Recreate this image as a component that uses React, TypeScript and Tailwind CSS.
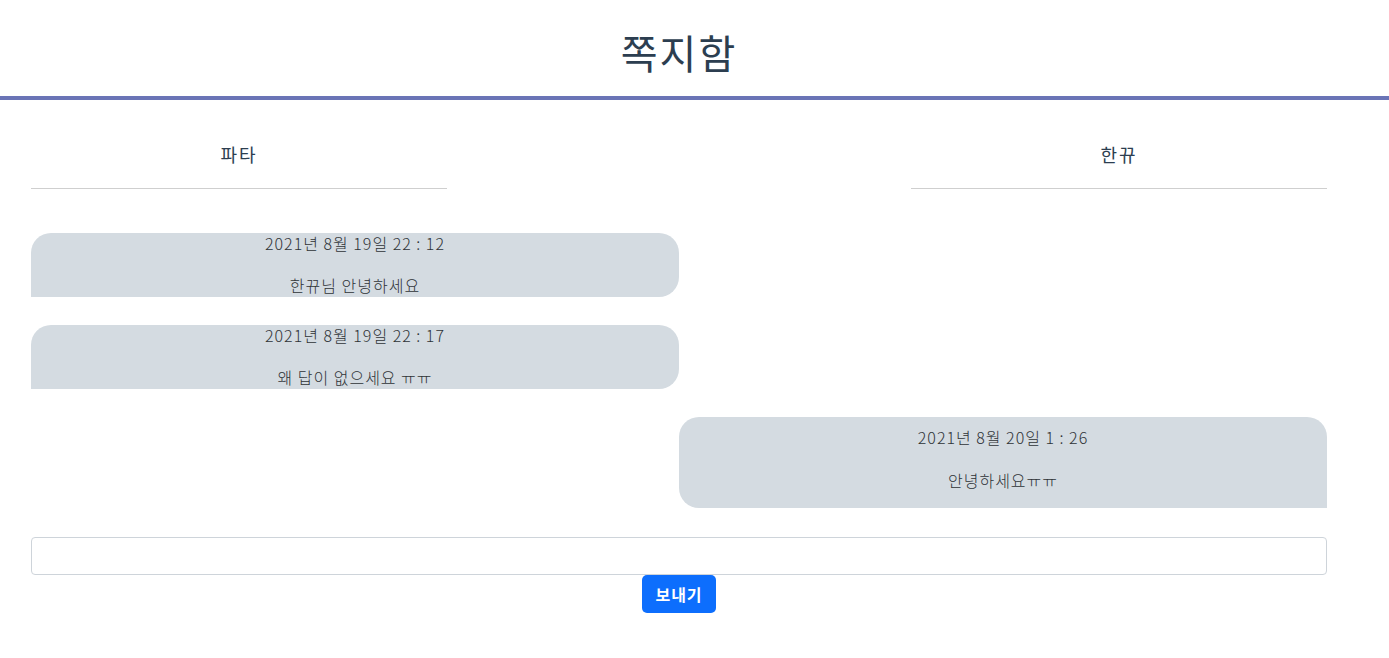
import { useState } from "react"

type Message = {
    id: number
    mine: boolean
    date: string
    text: string
}

const messages: Message[] = [
    { id: 1, mine: false, date: "2021년 8월 19일 22 : 12", text: "한뀨님 안녕하세요" },
    { id: 2, mine: false, date: "2021년 8월 19일 22 : 17", text: "왜 답이 없으세요 ㅠㅠ" },
    { id: 3, mine: true, date: "2021년 8월 20일 1 : 26", text: "안녕하세요ㅠㅠ" },
]

const font = { fontFamily: '"Noto Sans CJK KR", "Noto Sans", sans-serif' }

const Bubble = ({ message }: { message: Message }) => {
    if (message.mine) {
        return (
            <div className="flex justify-end">
                <div className="w-[648px] bg-[#d4dbe1] rounded-[20px] rounded-br-none pt-2 pb-4 text-center text-[#2f3337] text-base leading-6 font-light tracking-[1px]">
                    <p className="mb-[19px]">{message.date}</p>
                    <p>{message.text}</p>
                </div>
            </div>
        )
    }

    return (
        <div className="flex justify-start">
            <div className="w-[648px] bg-[#d4dbe1] rounded-[20px] rounded-bl-none text-center text-[#2f3337] text-base leading-6 font-light tracking-[1px]">
                <p className="-mt-[2px] mb-[18px]">{message.date}</p>
                <p>{message.text}</p>
            </div>
        </div>
    )
}

const App = () => {
    const [text, setText] = useState("")

    return (
        <div className="min-h-screen bg-white text-[#2c3e50]" style={font}>
            <header className="border-b-4 border-[#6a74b6]">
                <div className="ml-[31px] w-[1296px] flex justify-center pt-[22px] pb-[14px]">
                    <h1 className="text-[40px] leading-[60px] font-normal tracking-[2px]">쪽지함</h1>
                </div>
            </header>

            <main className="ml-[31px] w-[1296px]">
                <div className="flex justify-between mt-[33px]">
                    <div className="w-[416px] border-b border-[#cfcfcf] pb-[13px] text-center text-lg leading-[42px] font-normal tracking-[2px]">
                        파타
                    </div>
                    <div className="w-[416px] border-b border-[#cfcfcf] pb-[13px] text-center text-lg leading-[42px] font-normal tracking-[2px]">
                        한뀨
                    </div>
                </div>

                <div className="flex flex-col gap-7 mt-[44px]">
                    {messages.map((message) => (
                        <Bubble key={message.id} message={message} />
                    ))}
                </div>

                <div className="mt-[29px] flex flex-col items-center">
                    <input
                        value={text}
                        onChange={(e) => setText(e.target.value)}
                        className="w-full h-[38px] border border-[#ced4da] rounded px-3 outline-none"
                    />
                    <button className="h-[38px] px-[13px] bg-[#0d6efd] text-white font-bold text-base rounded-[5px] tracking-[1px]">
                        보내기
                    </button>
                </div>
            </main>
        </div>
    )
}

export default App
